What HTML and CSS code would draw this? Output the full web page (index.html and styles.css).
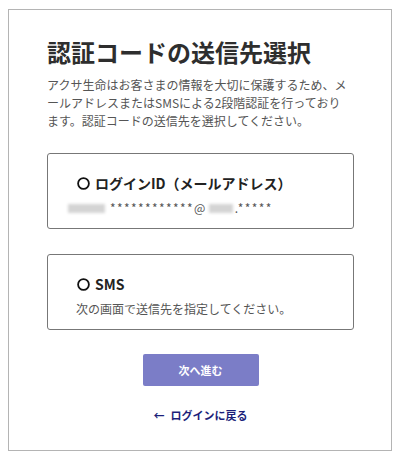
FILE: index.html
```html
<!DOCTYPE html>
<html lang="ja">
<head>
<meta charset="utf-8">
<title>認証コードの送信先選択</title>
<link rel="stylesheet" href="styles.css">
</head>
<body>
<div class="page">
  <main class="panel">
    <h1 class="title">認証コードの送信先選択</h1>
    <p class="lead">アクサ生命はお客さまの情報を大切に保護するため、メールアドレスまたはSMSによる2段階認証を行っており<br>ます。認証コードの送信先を選択してください。</p>

    <div class="option">
      <div class="option-head">
        <svg class="radio" width="13" height="13" viewBox="0 0 13 13"><circle cx="6.5" cy="6.5" r="5.4" fill="none" stroke="#111" stroke-width="1.8"/></svg>
        <span>ログインID（メールアドレス）</span>
      </div>
      <div class="option-desc option-desc--mail"><span class="blur blur--a"></span><span class="stars">************@</span><span class="blur blur--b"></span><span class="stars">.*****</span></div>
    </div>

    <div class="option">
      <div class="option-head">
        <svg class="radio" width="13" height="13" viewBox="0 0 13 13"><circle cx="6.5" cy="6.5" r="5.4" fill="none" stroke="#111" stroke-width="1.8"/></svg>
        <span>SMS</span>
      </div>
      <div class="option-desc option-desc--sms">次の画面で送信先を指定してください。</div>
    </div>

    <div class="actions">
      <button class="next" type="button">次へ進む</button>
      <a class="back" href="#"><span class="arrow">←</span>ログインに戻る</a>
    </div>
  </main>
</div>
</body>
</html>
```
FILE: styles.css
```css
html, body {
  margin: 0;
  padding: 0;
  background: #fff;
}
body {
  font-family: "Noto Sans CJK JP", "Noto Sans", sans-serif;
  color: #333;
}
.page {
  padding: 9px 8px;
}
.panel {
  box-sizing: border-box;
  width: 384px;
  height: 442px;
  border: 1px solid #b4b4b4;
  padding: 26px 37px 0 38px;
}
.title {
  margin: 0;
  font-size: 24px;
  line-height: 32px;
  font-weight: 700;
  color: #2e2e2e;
  letter-spacing: 0;
}
.lead {
  margin: 8px 0 0;
  font-size: 12px;
  line-height: 18px;
  color: #555;
}
.option {
  box-sizing: border-box;
  width: 307px;
  height: 76px;
  border: 1px solid #777;
  border-radius: 3px;
  padding: 19px 20px 0 20px;
  margin-top: 23px;
}
.option + .option {
  margin-top: 25px;
}
.option-head {
  display: flex;
  align-items: center;
  gap: 5px;
  padding-left: 9px;
  font-size: 14px;
  line-height: 20px;
  font-weight: 700;
  color: #222;
}
.radio {
  flex: none;
  width: 13px;
  height: 13px;
}
.option-desc {
  margin-top: 6px;
  font-size: 12px;
  line-height: 18px;
  color: #555;
}
.option-desc--mail {
  display: flex;
  align-items: center;
}
.option-desc--sms {
  padding-left: 8px;
}
.stars {
  letter-spacing: 1.4px;
}
.blur {
  display: inline-block;
  height: 9px;
  background: #d4d4d4;
  filter: blur(1.5px);
}
.blur--a {
  width: 37px;
  margin-right: 5px;
}
.blur--b {
  width: 24px;
  margin: 0 2px;
}
.actions {
  display: flex;
  flex-direction: column;
  align-items: center;
  margin-top: 24px;
}
.next {
  width: 116px;
  height: 32px;
  border: none;
  border-radius: 2px;
  background: #7b7dc7;
  color: #fff;
  font-family: inherit;
  font-size: 11px;
  font-weight: 700;
  padding: 0;
}
.back {
  margin-top: 20px;
  font-size: 11px;
  line-height: 18px;
  font-weight: 700;
  color: #1c1f7a;
  text-decoration: none;
}
.arrow {
  margin-right: 6px;
}
```
